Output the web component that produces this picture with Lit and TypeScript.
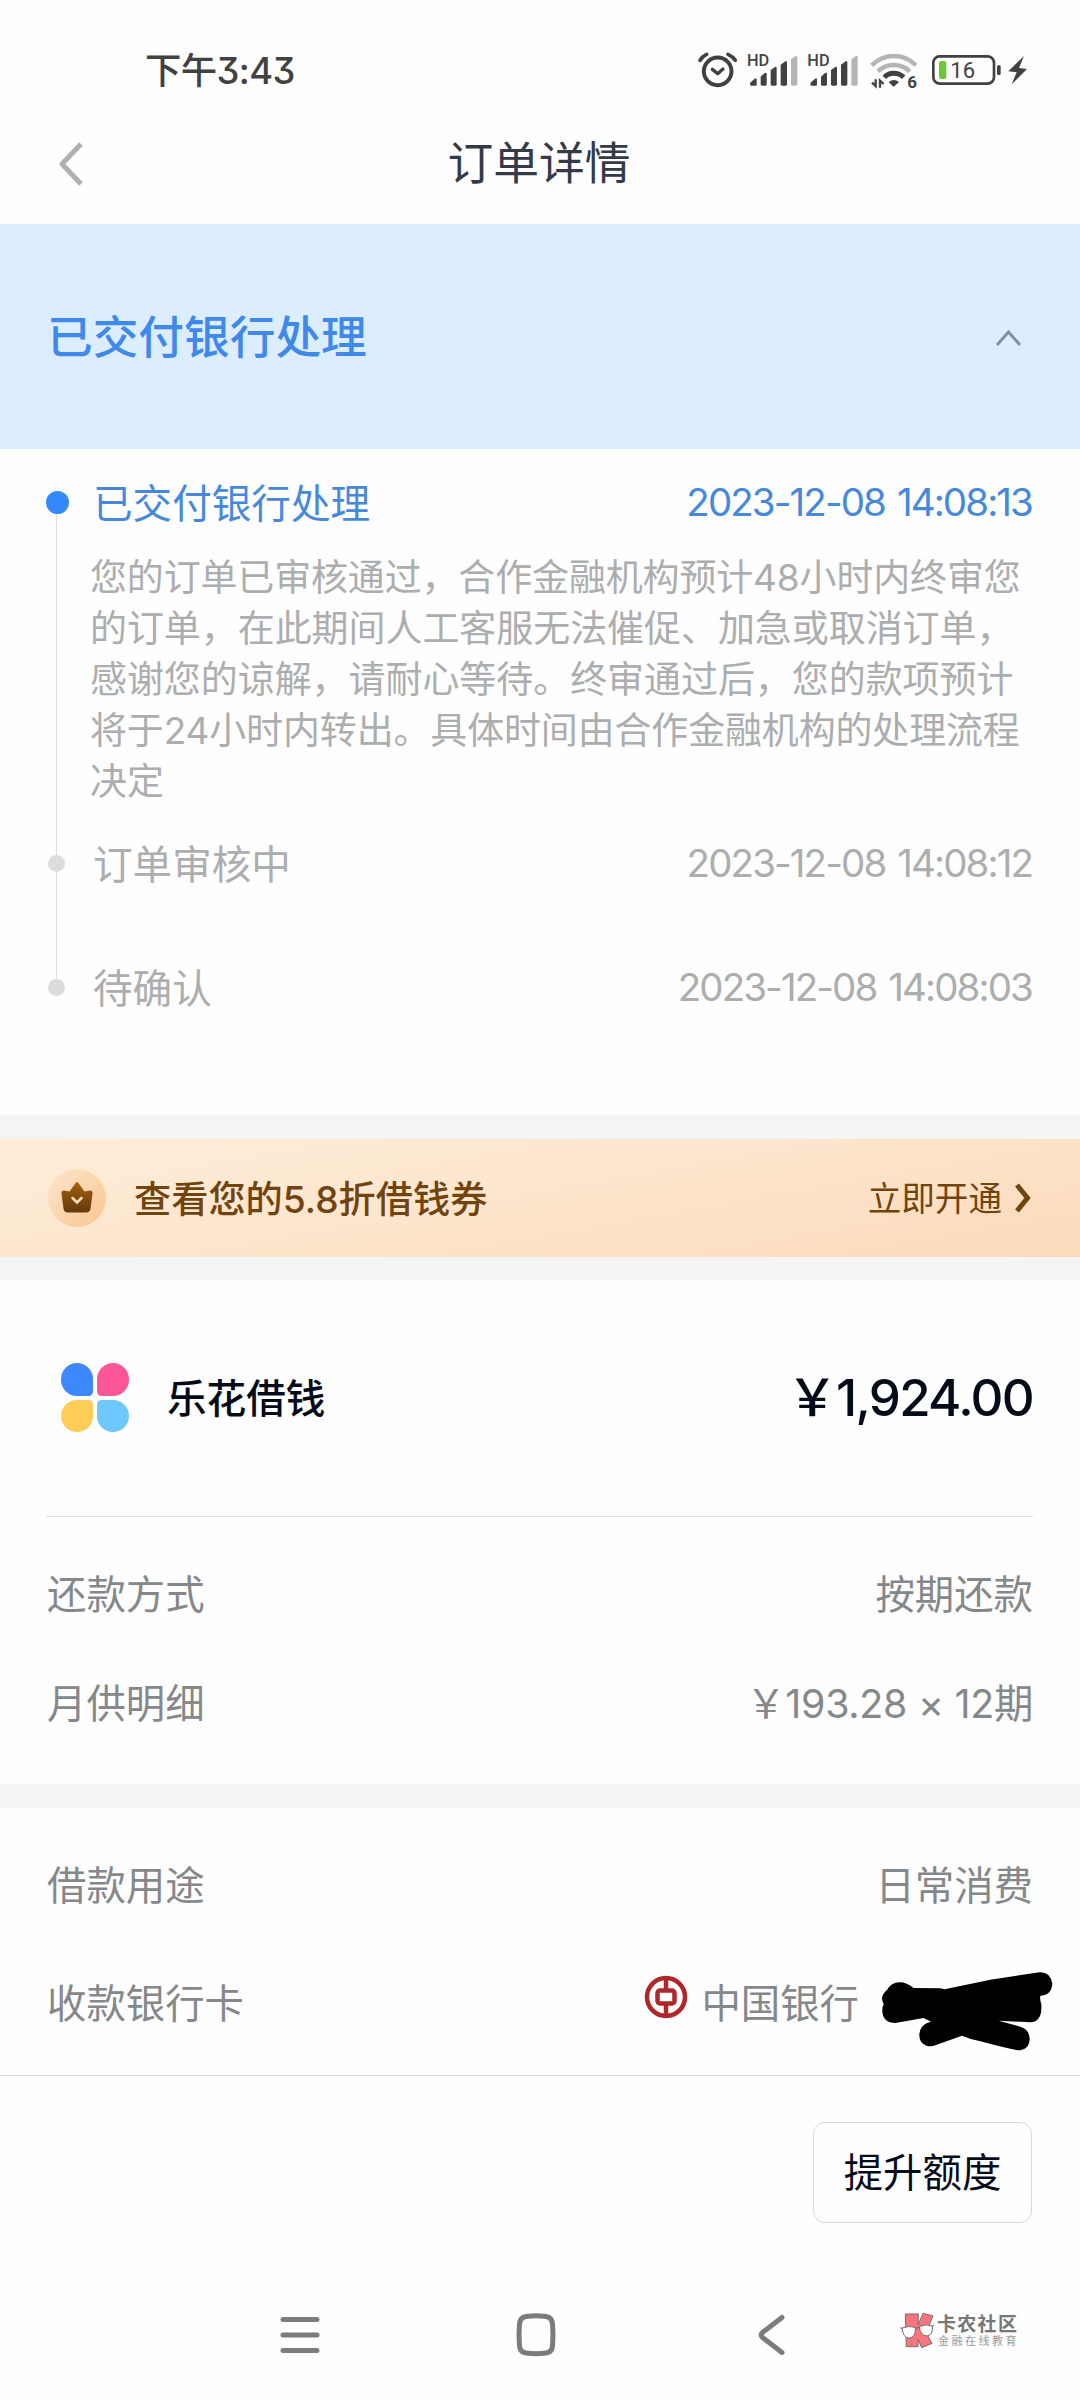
import { LitElement, html, css, svg } from "lit";
import { customElement, property } from "lit/decorators.js";

interface Step {
  title: string;
  time: string;
  active?: boolean;
  lines?: string[];
}

const STEPS: Step[] = [
  {
    title: "已交付银行处理",
    time: "2023-12-08 14:08:13",
    active: true,
    lines: [
      "您的订单已审核通过，合作金融机构预计48小时内终审您",
      "的订单，在此期间人工客服无法催促、加急或取消订单，",
      "感谢您的谅解，请耐心等待。终审通过后，您的款项预计",
      "将于24小时内转出。具体时间由合作金融机构的处理流程",
      "决定",
    ],
  },
  { title: "订单审核中", time: "2023-12-08 14:08:12" },
  { title: "待确认", time: "2023-12-08 14:08:03" },
];

const signal = (x: number) => svg`
  <g transform="translate(${x} 0)">
    <text x="-5" y="107" font-size="49" font-weight="500" fill="#444">HD</text>
    <g fill="#414141">
      <path d="M4 162 Q4 158 8 155 L18 146 Q24 143 24 149 V164 Q24 167 21 167 H8 Q4 167 4 162Z"/>
      <path d="M36 140 L48 129 Q54 127 54 132 V163 Q54 167 50 167 H40 Q36 167 36 163Z"/>
      <path d="M66 120 L79 111 Q84 109 84 114 V163 Q84 167 80 167 H70 Q66 167 66 163Z"/>
      <path d="M96 104 L110 94 Q115 92 115 97 V163 Q115 167 111 167 H101 Q96 167 96 163Z"/>
    </g>
    <path fill="#b5b5b5" d="M127 88 L141 78 Q146 76 146 81 V163 Q146 167 142 167 H132 Q127 167 127 163Z"/>
  </g>`;

@customElement("status-bar")
export class StatusBar extends LitElement {
  static styles = css`
    :host { display: flex; justify-content: space-between; height: 108px; padding: 0 20px 0 145px; box-sizing: border-box; }
    .clock { font-size: 36.4px; line-height: 54px; padding-top: 44px; color: #414141; font-weight: 500; font-feature-settings: "cv09"; letter-spacing: -0.6px; }
    .icons { width: 380px; height: 80px; margin-top: 30px; display: block; font-family: Roboto, sans-serif; }
  `;
  render() {
    return html`
      <span class="clock">下午3:43</span>
      <svg class="icons" viewBox="0 0 1140 240">
        <g fill="none" stroke="#414141" stroke-linecap="round" stroke-linejoin="round">
          <circle cx="113" cy="124" r="41.5" stroke-width="12"/>
          <path d="M97 118 L113 131 L129 117" stroke-width="10"/>
          <path d="M60 91 Q67 79 80 73 M144 73 Q158 79 166 91" stroke-width="11"/>
        </g>
        ${signal(206)}${signal(387)}
        <g fill="none" stroke-width="13">
          <path d="M575 106 Q604 78 641 78 Q680 78 708 106" stroke="#b5b5b5"/>
          <path d="M594 124 Q614 105 641 105 Q669 105 689 124" stroke="#b5b5b5"/>
          <path d="M613 142 Q624 130 641 130 Q659 130 671 142" stroke="#414141" stroke-width="15"/>
        </g>
        <path d="M626 156 Q641 144 657 156 L644 168 Q641 171 638 168Z" fill="#414141"/>
        <path d="M576 158 L587 168 V148 M600 173 V152 L611 162" fill="none" stroke="#414141" stroke-width="7"/>
        <text x="682" y="174" font-size="51" font-weight="700" fill="#414141">6</text>
        <rect x="760" y="79" width="182" height="82" rx="19" fill="none" stroke="#414141" stroke-width="8"/>
        <rect x="777" y="93" width="22" height="54" rx="6" fill="#6ec937"/>
        <text x="811" y="144" font-size="66" fill="#414141">16</text>
        <rect x="951" y="106" width="11" height="29" rx="4" fill="#414141"/>
        <path d="M1032 78 L985 124 L1010 127 L995 163 L1041 117 L1017 114Z" fill="#414141"/>
      </svg>`;
  }
}

@customElement("timeline-list")
export class TimelineList extends LitElement {
  @property({ attribute: false }) steps: Step[] = [];
  static styles = css`
    :host { display: block; height: 666px; padding: 23px 48px 0 46px; box-sizing: border-box; }
    .step { display: grid; grid-template-columns: 21px minmax(0, 1fr); column-gap: 26px; min-height: 124px; }
    .rail { display: flex; flex-direction: column; align-items: center; }
    .head { display: flex; justify-content: space-between; height: 62px; line-height: 64px; color: #acadae; font-size: 39.6px; }
    .active .head { color: #4588dc; }
    .time { letter-spacing: -1.9px; word-spacing: 3px; line-height: 61px; font-size: 38.5px; }
    .stem { width: 1.5px; background: #dedede; height: 22px; }
    .stem.none { background: transparent; }
    .stem.tail { flex: 1; }
    .dot { width: 17px; height: 17px; border-radius: 50%; background: #dcdcdc; }
    .active .dot { width: 23px; height: 23px; background: #3388fc; margin-left: 1px; }
    .active .stem.none { height: 19px; }
    .desc { margin: 18px 0 18px -3px; font-size: 36.95px; line-height: 51px; color: #acadae; }
    .line { display: block; white-space: nowrap; }
    .line:nth-child(3n + 1) { letter-spacing: -0.1px; }
    .active { min-height: 361px; }
  `;
  render() {
    return html`${this.steps.map(
      (s, i) => html`
        <div class="step ${s.active ? "active" : ""}">
          <div class="rail">
            <i class="stem ${i === 0 ? "none" : ""}"></i>
            <i class="dot"></i>
            <i class="stem tail ${i === this.steps.length - 1 ? "none" : ""}"></i>
          </div>
          <div>
            <div class="head"><span>${s.title}</span><span class="time">${s.time}</span></div>
            ${s.lines
              ? html`<div class="desc">${s.lines.map((l) => html`<span class="line">${l}</span>`)}</div>`
              : null}
          </div>
        </div>`
    )}`;
  }
}

@customElement("app-root")
export class AppRoot extends LitElement {
  static styles = css`
    :host {
      display: flex; flex-direction: column; width: 1080px; height: 2400px; overflow: hidden; background: #fefefe;
      font-family: Inter, "Noto Sans CJK SC", sans-serif; color: #060b1a;
    }
    svg { display: block; flex: none; }
    .nav { display: grid; grid-template-columns: 190px 1fr 190px; align-items: center; height: 116px; padding: 0 2px 4px 0; box-sizing: border-box; }
    .nav svg { margin-left: 54px; }
    .nav h1 { margin: 0; text-align: center; font-size: 45.8px; font-weight: 400; line-height: 66px; color: #343a48; }
    .status { display: flex; justify-content: space-between; align-items: center; height: 225px; padding: 0 56px 0 47px; box-sizing: border-box; background: #dceefe; }
    .status h2 { margin: 0; font-size: 45.7px; font-weight: 500; line-height: 66px; padding-top: 2px; color: #4089ea; }
    .gap { height: 24px; background: #f3f5f5; }
    .gap.short { height: 23px; }
    .banner { display: flex; align-items: center; height: 118px; padding: 0 48px 0 48px; box-sizing: border-box; background: linear-gradient(170deg, #feecd9 0%, #fde6ce 45%, #fadab9 100%); color: #71440f; }
    .banner strong { flex: 1; margin-left: 28px; padding-bottom: 3px; font-size: 37.2px; font-weight: 500; }
    .banner span { font-size: 33.6px; margin-right: 11px; padding-bottom: 3px; }
    .amount { display: flex; align-items: center; height: 237px; margin: 0 47px 0 46px; border-bottom: 1.5px solid #dcdcdd; box-sizing: border-box; }
    .amount strong { flex: 1; margin-left: 35px; padding-bottom: 6px; font-size: 39.6px; font-weight: 500; }
    .money { font-size: 51px; font-weight: 500; letter-spacing: -1.7px; padding-bottom: 9px; }
    .row { display: flex; justify-content: space-between; align-items: center; padding: 0 47px 0 47px; font-size: 39.4px; color: #85888a; }
    .r1 { height: 109px; margin-top: 20px; }
    .r2 { height: 109px; margin-bottom: 29px; }
    .r3 { height: 118px; margin-top: 15px; }
    .r4 { height: 118px; margin-bottom: 16px; padding-right: 26px; }
    .instal { letter-spacing: -0.3px; }
    .bank { display: flex; align-items: center; }
    .bank span { margin: 0 23px 0 13px; }
    .coin { margin-top: 6px; }
    .scribble { margin-top: 24px; }
    .actions { display: flex; justify-content: flex-end; border-top: 1.5px solid #d9dadb; padding: 46px 48px 0 0; height: 203px; box-sizing: border-box; }
    button { width: 219px; height: 101px; padding: 0 0 6px; border: 1.5px solid #d8d8da; border-radius: 12px; background: #fefefe; font: 400 39.4px Inter, "Noto Sans CJK SC", sans-serif; color: #060b1a; }
    .system { display: flex; align-items: flex-start; padding: 32px 0 0 278px; }
    .k1 { margin-left: 193px; }
    .k2 { margin-left: 200px; }
    .mark { display: flex; margin-left: 113px; gap: 1px; }
    .words { display: flex; flex-direction: column; padding-top: 4px; white-space: nowrap; }
    .w1 { font-size: 19px; line-height: 22px; letter-spacing: 1.3px; font-weight: 700; color: #777; }
    .w2 { font-size: 11px; line-height: 11px; letter-spacing: 2.5px; color: #999; padding-left: 1px; }
  `;
  render() {
    return html`
      <status-bar></status-bar>
      <div class="nav">
        <svg width="34" height="50"><path d="M27 5 L8 25 L27 45" fill="none" stroke="#b0b0b4" stroke-width="5" stroke-linejoin="round"/></svg>
        <h1>订单详情</h1>
      </div>
      <div class="status">
        <h2>已交付银行处理</h2>
        <svg width="31" height="22"><path d="M4 19 L15.500 6 L27 19" fill="none" stroke="#81909e" stroke-width="3"/></svg>
      </div>
      <timeline-list .steps=${STEPS}></timeline-list>
      <div class="gap"></div>
      <div class="banner">
        <svg width="58" height="60" viewBox="0 0 58 60">
          <defs>
            <linearGradient id="disc" x2="1" y2="1"><stop stop-color="#fde5cc"/><stop offset="1" stop-color="#f9c690"/></linearGradient>
            <linearGradient id="crown" x2="0" y2="1"><stop stop-color="#a5600f"/><stop offset="1" stop-color="#64390b"/></linearGradient>
          </defs>
          <circle cx="29" cy="30" r="29" fill="url(#disc)"/>
          <path d="M16 22.500 L21.500 23.500 L28 14.500 Q29 13.500 30 14.500 L36.500 23.500 L42 22.500 Q45 22.500 44.500 26 L42.500 40.500 Q42 44.500 38 44.500 H20 Q16 44.500 15.500 40.500 L13.500 26 Q13 22.500 16 22.500Z" fill="url(#crown)"/>
          <path d="M24.500 30 L29 34.500 L33.500 30" fill="none" stroke="#fde0c2" stroke-width="2.500" stroke-linecap="round"/>
        </svg>
        <strong>查看您的5.8折借钱券</strong>
        <span>立即开通</span>
        <svg width="19" height="32"><path d="M4 3 L14.500 16 L4 29" fill="none" stroke="#71440f" stroke-width="5"/></svg>
      </div>
      <div class="gap short"></div>
      <div class="amount">
        <svg width="86" height="72" viewBox="-15 -1 86 72">
          <path d="M16 0 A16 16 0 0 1 32 16 V28 Q32 33 27 33 H16 A16 16.500 0 0 1 16 0Z" fill="#3d88fc"/>
          <path d="M52 0 A16 16.500 0 0 1 52 33 H41 Q36 33 36 28 V16 A16 16 0 0 1 52 0Z" fill="#fd5698"/>
          <path d="M16 37 H27 Q32 37 32 42 V54 A16 16 0 1 1 16 37Z" fill="#fecd58"/>
          <path d="M41 37 H52 A16 16 0 1 1 36 54 V42 Q36 37 41 37Z" fill="#6fc8fd"/>
        </svg>
        <strong>乐花借钱</strong>
        <span class="money">￥1,924.00</span>
      </div>
      <div class="row r1"><span>还款方式</span><span>按期还款</span></div>
      <div class="row r2"><span>月供明细</span><span class="instal">￥193.28 × 12期</span></div>
      <div class="gap"></div>
      <div class="row r3"><span>借款用途</span><span>日常消费</span></div>
      <div class="row r4">
        <span>收款银行卡</span>
        <div class="bank">
          <svg class="coin" width="44" height="56" viewBox="0 0 44 56">
            <g fill="none" stroke="#af262b" stroke-width="4.500">
              <circle cx="22" cy="22" r="19"/>
              <rect x="13.500" y="15.500" width="17" height="13" rx="2.500"/>
              <path d="M22 3 V15 M22 29 V41"/>
            </g>
          </svg>
          <span>中国银行</span>
          <svg class="scribble" width="172" height="80" viewBox="785 395 516 240">
            <path fill="#000" d="M785 473 Q787 460 800 449 Q812 427 838 426 Q857 425 880 443 L960 444 L973 447 L1110 418 L1257 396 Q1290 394 1296 430 Q1294 464 1260 466 Q1258 478 1263 492 Q1266 545 1230 546 L1135 541 L1200 559 Q1227 567 1228 596 Q1226 630 1192 630 Q1150 622 1080 603 Q1050 597 1025 586 L945 615 Q932 620 918 616 Q896 608 897 582 Q898 558 920 548 L932 544 L910 533 L825 548 Q790 548 786 515 Q785 500 790 492 Q785 484 785 473Z"/>
          </svg>
        </div>
      </div>
      <div class="actions"><button>提升额度</button></div>
      <div class="system">
        <svg width="44" height="50"><path d="M5 9.500 H39 M5 25 H39 M5 40.500 H39" stroke="#7c7c7c" stroke-width="5" stroke-linecap="round"/></svg>
        <svg class="k1" width="42" height="50"><path d="M11 6.500 Q21 5 31 6.500 Q37 7.500 37.500 14 Q38.500 25 37.500 36 Q37 42 31 43 Q21 44.500 11 43 Q5 42 4.500 36 Q3.500 25 4.500 14 Q5 7.500 11 6.500Z" fill="none" stroke="#7c7c7c" stroke-width="5"/></svg>
        <svg class="k2" width="30" height="50"><path d="M25 7.500 L5.500 22.500 Q3 25 5.500 27.500 L25 42.500" fill="none" stroke="#7c7c7c" stroke-width="5" stroke-linecap="round"/></svg>
        <div class="mark">
          <svg width="36" height="44" viewBox="480 660 108 132">
            <g fill="#fa7580" stroke="#77696b" stroke-width="3">
              <path d="M496 672 H535 L534 705 L549 670 L579 678 L558 728 L576 760 L545 773 L534 748 V770 H499Z"/>
            </g>
            <g fill="#fff" stroke="#77696b" stroke-width="3">
              <path d="M486 714 Q505 706 526 712 Q529 742 506 745 Q489 742 486 714Z"/>
              <path d="M538 710 Q558 700 577 708 Q580 735 561 738 Q541 737 538 710Z"/>
              <path d="M480 713 L488 716 M526 715 L538 712 M577 708 L583 705" fill="none"/>
            </g>
          </svg>
          <div class="words"><span class="w1">卡农社区</span><span class="w2">金融在线教育</span></div>
        </div>
      </div>
    `;
  }
}
